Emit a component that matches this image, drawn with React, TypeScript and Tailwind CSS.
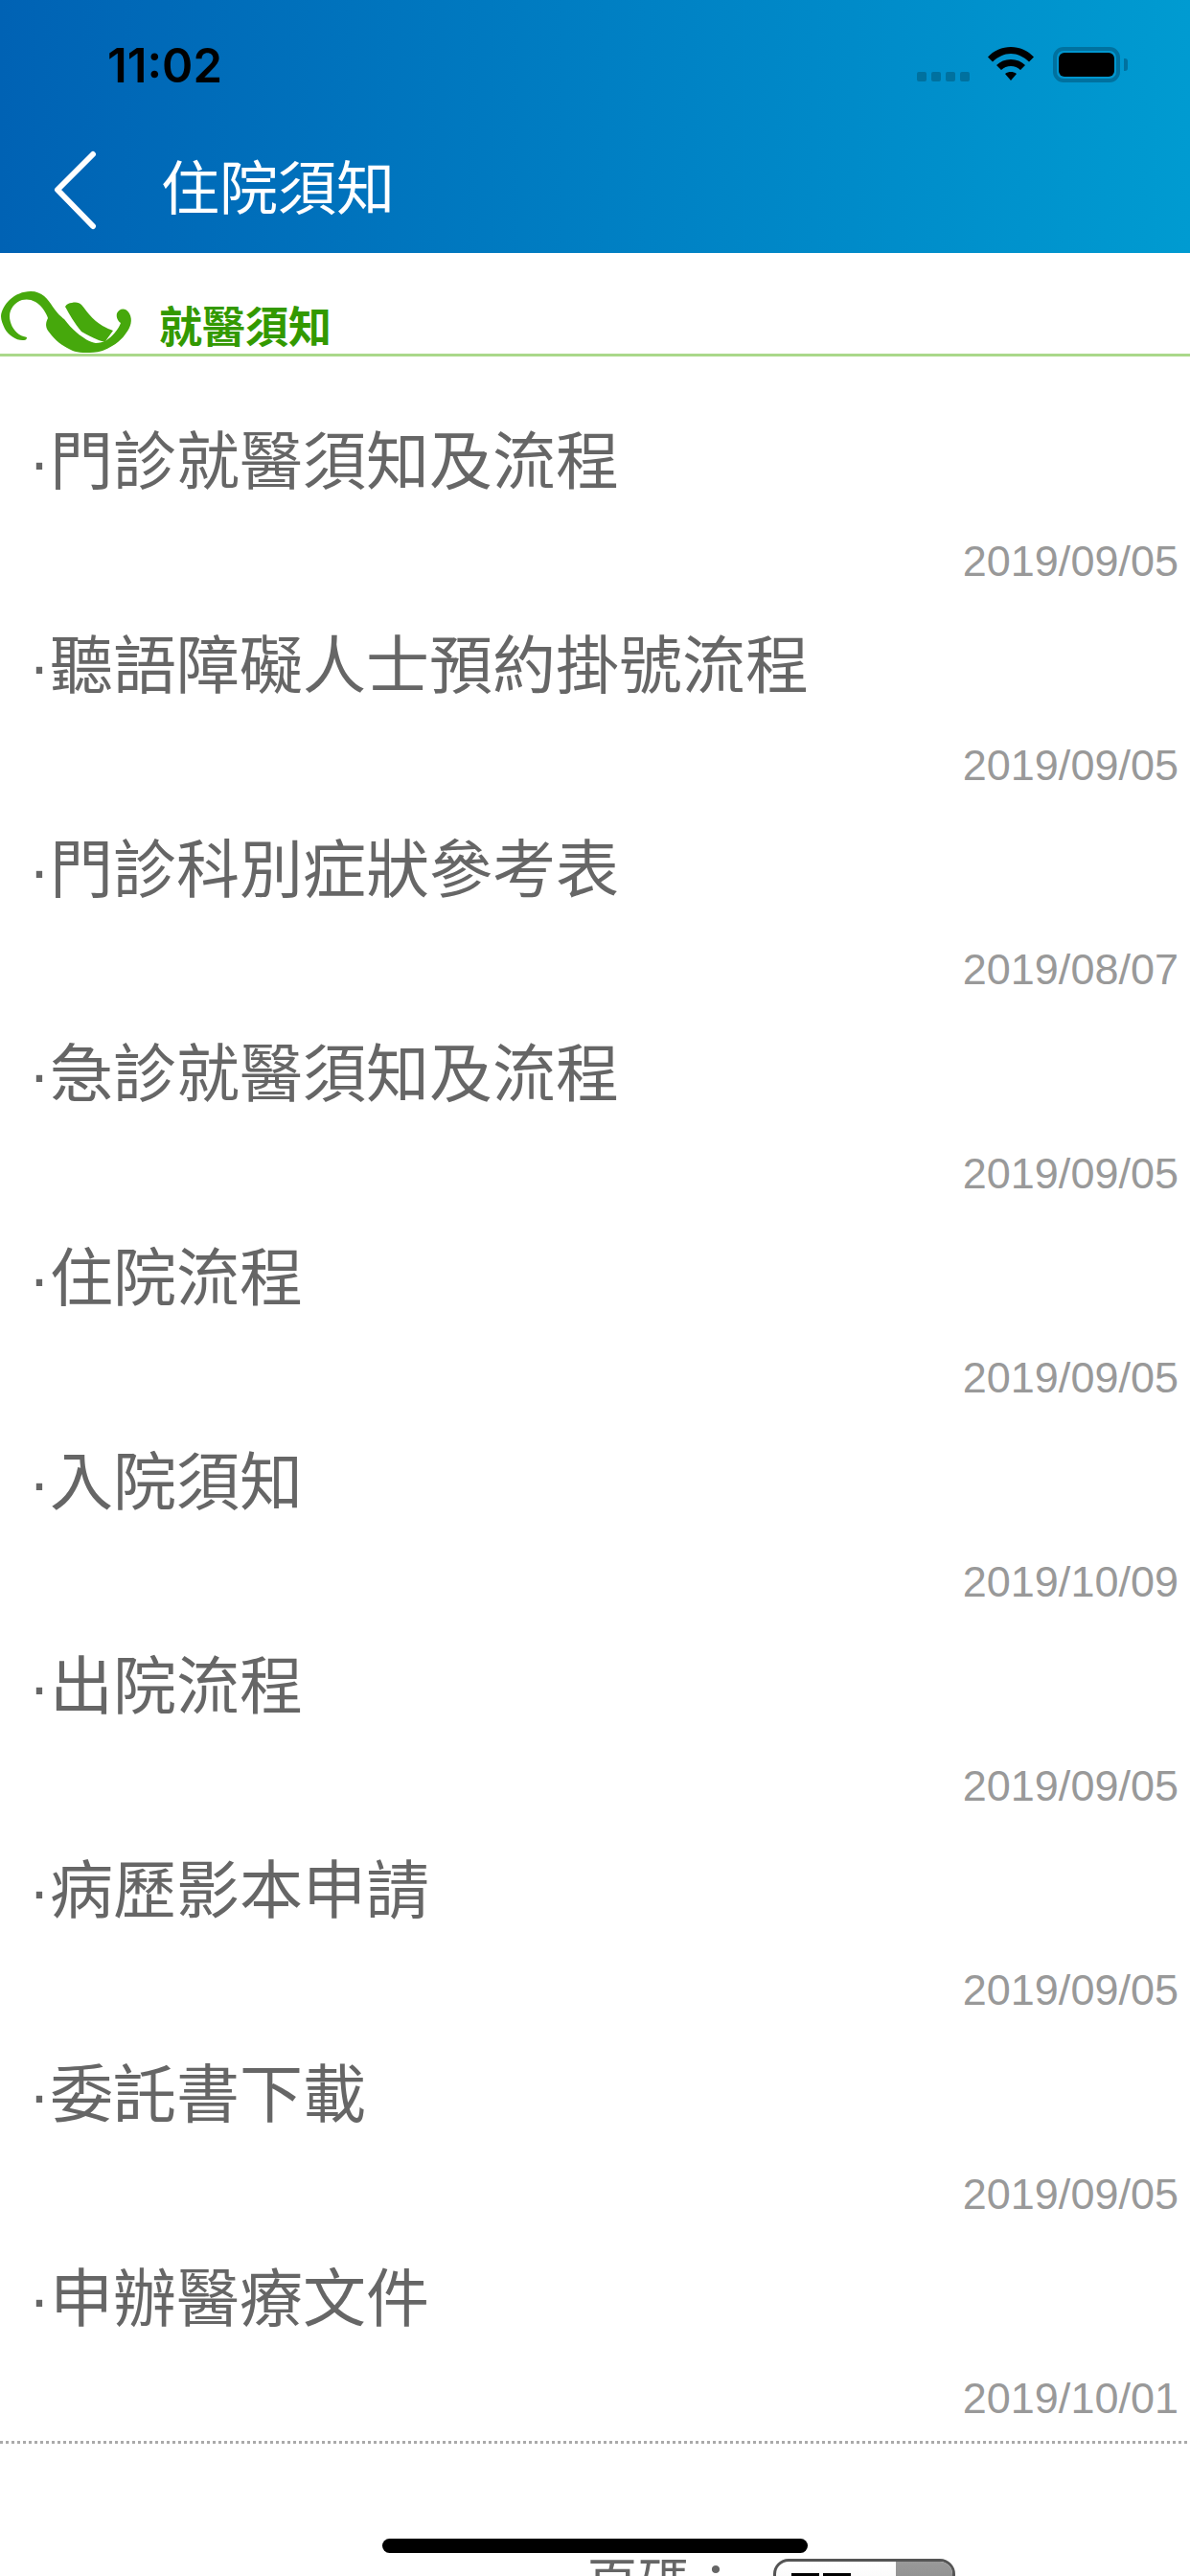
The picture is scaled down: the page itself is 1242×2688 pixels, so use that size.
const rows = [
  ["門診就醫須知及流程", "2019/09/05"],
  ["聽語障礙人士預約掛號流程", "2019/09/05"],
  ["門診科別症狀參考表", "2019/08/07"],
  ["急診就醫須知及流程", "2019/09/05"],
  ["住院流程", "2019/09/05"],
  ["入院須知", "2019/10/09"],
  ["出院流程", "2019/09/05"],
  ["病歷影本申請", "2019/09/05"],
  ["委託書下載", "2019/09/05"],
  ["申辦醫療文件", "2019/10/01"],
];

const cjk = "font-['Liberation_Sans','Noto_Sans_CJK_TC',sans-serif]";

const Leaf = () => (
  <svg width="140" height="69" viewBox="0 0 140 69" className="shrink-0">
    <g fill="#46a80c">
      <path d="M1 30C2 18 15 4 32 4 44 4 50 12 55 20 60 27 64 31 67 33 71 38 75 43 80 47 87 53 94 57 100 58 108 58 114 54 120 47 123 43 125 40 126 37 123 35 121 31 122 27 124 22 131 20 135 27 139 34 136 42 132 47 128 53 122 60 107 66 100 68 95 68 90 68 80 68 75 66 70 63 62 59 55 52 50 45 47 40 48 36 50 32 49 28 44 19 37 15 32 12 27 12 23 13 16 15 10 22 10 30 10 37 14 45 20 49 23 51 26 51 28 52 28 54 27 55 25 55 18 56 9 50 5 43 3 39 1 34 1 30Z" />
      <path d="M68 20C70 17 72 16 75 16 80 15 83 16 85 18 88 21 90 25 93 28 97 33 102 37 107 40 111 42 115 44 118 45L110 56C107 56 105 56 103 55 96 52 90 49 85 46 78 38 72 27 68 20Z" />
    </g>
  </svg>
);

const Row = ({ title, date }: { title: string; date: string }) => (
  <div className="h-[213px]">
    <div className="h-[143px] pl-[30px] pt-[20px] text-[66px] leading-[90px] text-[#666666]">·{title}</div>
    <div className="pr-[12px] text-right text-[45px] leading-[52px] text-[#999999]">{date}</div>
  </div>
);

const App = () => {
  return (
    <div className={`relative w-[1242px] h-[2688px] overflow-hidden bg-white ${cjk}`}>
      <header className="h-[264px] bg-gradient-to-r from-[#0062b4] to-[#009bd1]">
        <div className="h-[132px] flex items-start justify-between">
          <span className="ml-[112px] mt-[41px] text-[49px] leading-[56px] font-semibold text-black font-['Inter',sans-serif]">
            11:02
          </span>
          <div className="mr-[65px] mt-[49px] flex items-start">
            <div className="mt-[26px] mr-[19px] flex gap-[5px]">
              <i className="block w-[10px] h-[10px] rounded-[2px] bg-[#00719f]" />
              <i className="block w-[10px] h-[10px] rounded-[2px] bg-[#00719f]" />
              <i className="block w-[10px] h-[10px] rounded-[2px] bg-[#00719f]" />
              <i className="block w-[10px] h-[10px] rounded-[2px] bg-[#00719f]" />
            </div>
            <svg width="48" height="36" viewBox="0 0 48 36" className="mr-[20px]">
              <path d="M0 10.500C6 4 15 0 24 0s18 4 24 10.500l-5 5C37 10 31 7 24 7S11 10 5 15.500Z" fill="#000" />
              <path d="M9 19c4-4 9-6 15-6s11 2 15 6l-5 5c-3-2.500-6-4-10-4s-7 1.500-10 4Z" fill="#000" />
              <path d="M18 28c2-1.500 4-2 6-2s4 .5 6 2l-6 7Z" fill="#000" />
            </svg>
            <div className="flex items-center">
              <div className="w-[70px] h-[37px] rounded-[11px] border-[4px] border-[#00719f] p-[2px]">
                <div className="w-full h-full rounded-[6px] bg-black" />
              </div>
              <div className="ml-[4px] w-[4px] h-[13px] rounded-r-[3px] bg-[#00719f]" />
            </div>
          </div>
        </div>
        <div className="h-[132px] flex items-start">
          <svg width="46" height="84" viewBox="0 0 46 84" className="ml-[55px] mt-[25px]">
            <path d="M42 4 5 41l37 38" fill="none" stroke="#fff" strokeWidth="6" strokeLinecap="round" strokeLinejoin="round" />
          </svg>
          <h1 className="ml-[67px] mt-[30px] text-[61px] leading-[72px] font-normal text-white">住院須知</h1>
        </div>
      </header>

      <div className="h-[108px] flex items-end border-b-[3px] border-[#aad88a]">
        <Leaf />
        <span className="ml-[26px] text-[45px] leading-[52px] font-bold text-[#339900]">就醫須知</span>
      </div>

      <main className="pt-[45px]">
        {rows.map(([title, date]) => (
          <Row key={title} title={title} date={date} />
        ))}
      </main>

      <div className="h-[3px] bg-[repeating-linear-gradient(90deg,#aaaaaa_0,#aaaaaa_3px,transparent_3px,transparent_6px)]" />

      <div className="mt-[114px] ml-[612px] flex items-start">
        <span className="text-[54px] leading-[64px] text-[#666666]">頁碼：</span>
        <div className="ml-[33px] mt-[6px] w-[190px] h-[70px] rounded-[16px] border-[3px] border-[#555555] bg-gradient-to-b from-white to-[#eeeeee] flex overflow-hidden">
          <div className="flex-1 pl-[16px] pt-[12px] flex gap-[4px]">
            <i className="block w-[29px] h-[3px] bg-black" />
            <i className="block w-[29px] h-[3px] bg-black" />
          </div>
          <div className="w-[59px] bg-gradient-to-b from-[#999999] to-[#808080]" />
        </div>
      </div>

      <div className="absolute left-[399px] top-[2649px] w-[444px] h-[15px] rounded-full bg-black" />
    </div>
  );
};

export default App;
